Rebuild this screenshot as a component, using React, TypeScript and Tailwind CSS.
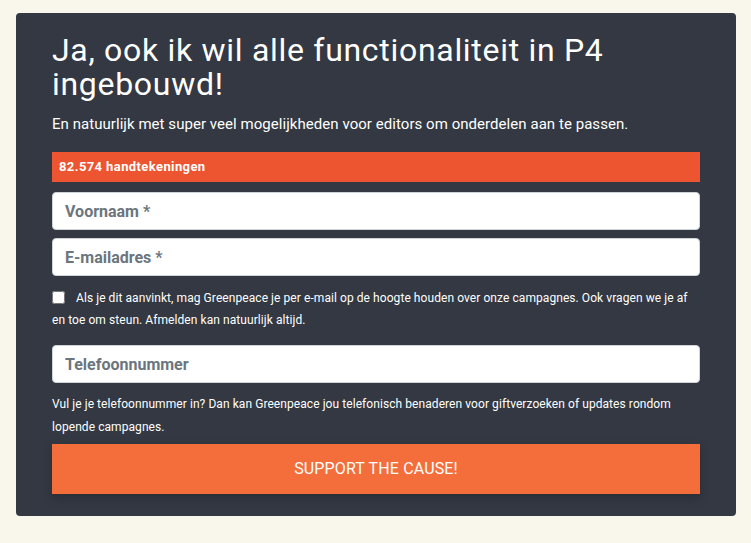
import React from "react";

export default function App() {
  return (
    <div className="min-h-[543px] w-full bg-[#f9f6eb] pt-[13px] px-[16px]" style={{ fontFamily: "Roboto, 'Noto Sans', sans-serif" }}>
      <div className="w-[720px] rounded-[4px] bg-[#333842] px-[36px] pt-[20px] pb-[22px]">
        <h1 className="text-[32px] leading-[34px] font-normal tracking-[0.7px] text-white">
          Ja, ook ik wil alle functionaliteit in P4 ingebouwd!
        </h1>
        <p className="mt-[12px] text-[15px] leading-[22px] tracking-[0.05px] text-white">
          En natuurlijk met super veel mogelijkheden voor editors om onderdelen aan te passen.
        </p>
        <div className="mt-[17px] h-[30px] bg-[#ec552f] px-[7px] flex items-center text-[13px] font-bold tracking-[0.4px] text-white">
          82.574 handtekeningen
        </div>
        <div className="mt-[10px] flex flex-col gap-[8px]">
          <input
            className="h-[38px] w-full rounded-[4px] border border-[#ced4da] bg-white px-[12px] text-[16px] font-bold placeholder:text-[#6c757d] outline-none"
            placeholder="Voornaam *"
          />
          <input
            className="h-[38px] w-full rounded-[4px] border border-[#ced4da] bg-white px-[12px] text-[16px] font-bold placeholder:text-[#6c757d] outline-none"
            placeholder="E-mailadres *"
          />
        </div>
        <div className="mt-[11px] text-[12px] leading-[22px] tracking-[0.07px] text-white">
          <input type="checkbox" className="mr-[11px] h-[13px] w-[13px] align-[-2px]" />
          Als je dit aanvinkt, mag Greenpeace je per e-mail op de hoogte houden over onze campagnes. Ook vragen we je af en toe om steun. Afmelden kan natuurlijk altijd.
        </div>
        <input
          className="mt-[14px] h-[38px] w-full rounded-[4px] border border-[#ced4da] bg-white px-[12px] text-[16px] font-bold placeholder:text-[#6c757d] outline-none"
          placeholder="Telefoonnummer"
        />
        <p className="mt-[10px] text-[12px] leading-[22.5px] tracking-[0.07px] text-white">
          Vul je je telefoonnummer in? Dan kan Greenpeace jou telefonisch benaderen voor giftverzoeken of updates rondom lopende campagnes.
        </p>
        <button className="mt-[6px] h-[50px] w-full bg-[#f36e3a] text-[16px] tracking-[0.15px] text-white shadow-[0_4px_10px_rgba(0,0,0,0.2)]">
          SUPPORT THE CAUSE!
        </button>
      </div>
    </div>
  );
}
